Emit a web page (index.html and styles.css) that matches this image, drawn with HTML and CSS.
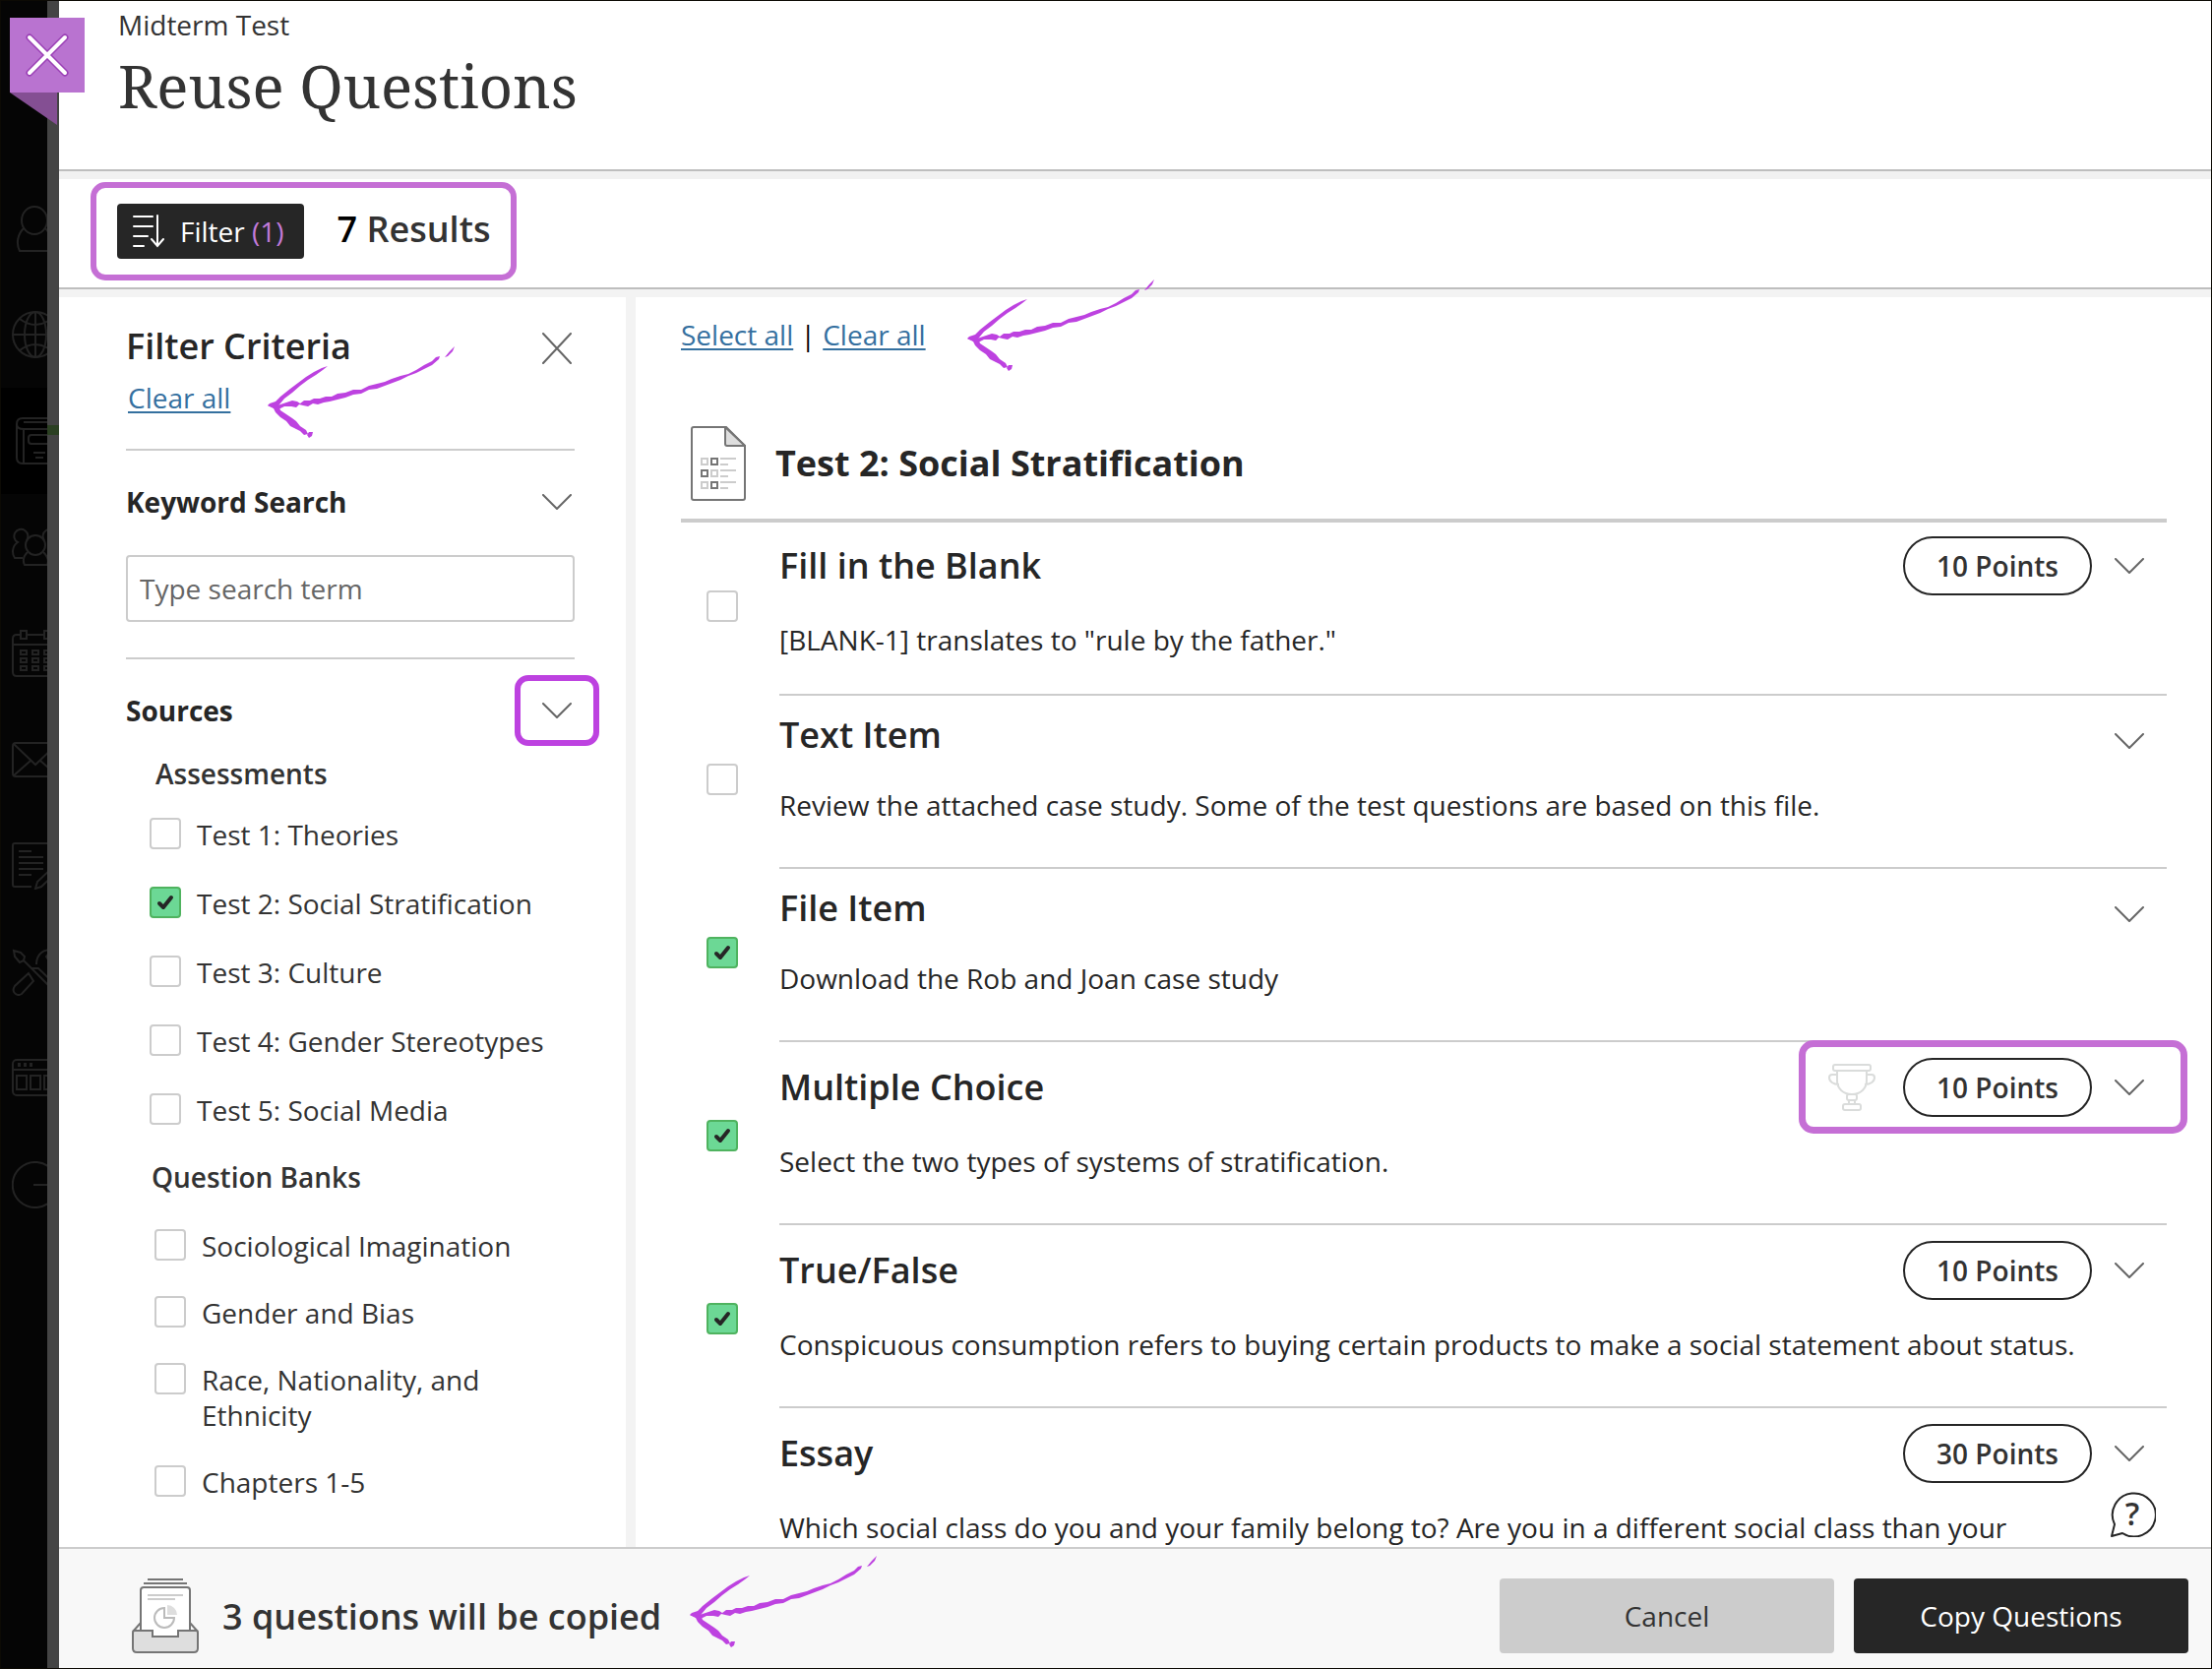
FILE: index.html
```html
<!DOCTYPE html>
<html lang="en">
<head>
<meta charset="utf-8">
<title>Reuse Questions</title>
<link rel="stylesheet" href="styles.css">
</head>
<body>
<svg class="defs" aria-hidden="true">
  <symbol id="chevron" viewBox="0 0 30 16"><path d="M1 1L15 15L29 1" fill="none" stroke="#666" stroke-width="2" stroke-linecap="round" stroke-linejoin="round"/></symbol>
  <symbol id="arrow" viewBox="0 0 192 94"><g fill="#bd42e0">
    <path d="M8 62L14 60L20 58L26 56L31 57L34 59L38 56L44 56L48 54L54 54L60 52L66 52L72 49L80 48L88 45L96 45L104 41L112 39L120 37L127 34L136 31L144 29L152 25L160 20L168 16L172 12L176 11L175 14L168 20L160 24L152 28L144 31L136 35L128 38L120 41L112 44L104 45L96 49L88 50L80 53L72 55L64 57L58 58L52 60L47 59L42 62L37 61L33 60L30 63L25 62L18 62L12 65Z"/>
    <path d="M181 12L186 6L191 1L189 6L184 11Z"/>
    <path d="M1 61L3 59L9 57L14 52L24 44L32 38L40 32L48 27L56 23L62 21L57 25L50 30L42 35L34 41L26 48L18 54L13 60L10 65Z"/>
    <path d="M1 61L12 61L14 66L20 70L26 74L30 77L34 82L40 86L42 90L38 91L34 87L28 84L24 82L20 77L14 73L9 68L7 64Z"/>
    <path d="M41 91L43 88L47 88L46 92L43 94Z"/>
  </g></symbol>
</svg>
<div class="app">
  <nav class="rail" aria-label="Main">
    <a class="rail-item" href="#" aria-label="Profile"><svg viewBox="0 0 48 48"><ellipse cx="23" cy="16" rx="13" ry="14"/><path d="M12 24C6 30 4 39 8 47H38C42 39 40 30 34 24"/></svg></a>
    <a class="rail-item" href="#" aria-label="Institution"><svg viewBox="0 0 48 48"><circle cx="24" cy="24" r="23"/><ellipse cx="24" cy="24" rx="11" ry="23"/><path d="M24 1V47M1 24H47M8 8Q24 20 40 8M8 40Q24 28 40 40"/></svg></a>
    <a class="rail-item rail-item-active" href="#" aria-label="Courses"><svg viewBox="0 0 48 48"><path d="M44 1H11Q5 1 5 7V41Q5 47 11 47H44M5 7Q5 12 12 12H44M12 12V47M12 5H44M44 18H20Q17 18 17 21V24Q17 27 20 27H44M22 36H34M24 41H32"/></svg></a>
    <a class="rail-item" href="#" aria-label="Organizations"><svg viewBox="0 0 48 48"><circle cx="24" cy="22" r="10"/><path d="M16 29C12 33 11 38 13 42H36C38 38 36 33 32 29M15 17A7 7 0 1 0 6 19C0 23 0 31 3 35H11M33 17A7 7 0 1 1 42 19C48 23 48 31 45 35H37"/></svg></a>
    <a class="rail-item" href="#" aria-label="Calendar"><svg viewBox="0 0 48 48"><path d="M9 5H5Q1 5 1 9V43Q1 47 5 47H43Q47 47 47 43V9Q47 5 43 5H39M15 5H33M1 15H47M9 1H15V9H9ZM33 1H39V9H33ZM9 21H15V25H9ZM21 21H27V25H21ZM33 21H39V25H33ZM9 29H15V33H9ZM21 29H27V33H21ZM33 29H39V33H33ZM9 37H15V41H9ZM21 37H27V41H21ZM33 37H39V41H33Z"/></svg></a>
    <a class="rail-item" href="#" aria-label="Messages"><svg viewBox="0 0 48 48"><rect x="1" y="7" width="46" height="34" rx="3"/><path d="M2 8L24 29L46 8M2 40L19 25M46 40L29 25"/></svg></a>
    <a class="rail-item" href="#" aria-label="Grades"><svg viewBox="0 0 48 48"><path d="M20 45H3Q1 45 1 43V3Q1 1 3 1H38Q40 1 40 3V24M7 9H20M7 15H32M7 21H32M7 27H32M7 33H20M24 47L26 40L42 25L46 30L30 45Z"/></svg></a>
    <a class="rail-item" href="#" aria-label="Tools"><svg viewBox="0 0 48 48"><path d="M2 2L9 4L13 8L12 12L8 14L3 8ZM12 12L20 20M17 25L3 38C-1 44 5 49 10 46L22 33ZM20 20L42 42L46 38L27 20ZM25 16C25 6 32 0 40 2L35 8L38 13L44 12"/></svg></a>
    <a class="rail-item" href="#" aria-label="Content"><svg viewBox="0 0 48 48"><rect x="1" y="5" width="46" height="36" rx="4"/><path d="M1 15H47M5 21H15V35H5ZM19 21H29V35H19ZM33 21H43V35H33Z"/><path d="M6 10H9M12 10H15M18 10H21" stroke-width="4"/></svg></a>
    <a class="rail-item" href="#" aria-label="Sign out"><svg viewBox="0 0 48 48"><path d="M42 10A23 23 0 1 0 42 38M22 24H47"/></svg></a>
  </nav>
  <div class="panel">
    <button class="ribbon" type="button" aria-label="Close"><svg viewBox="0 0 76 110"><path d="M0 76H48V109Z" fill="#844f93"/><path d="M0 0H76V76H0Z" fill="#b973d0"/><path d="M20 20L56 56M56 20L20 56" stroke="#9a3fb5" stroke-width="7" stroke-linecap="round"/><path d="M20 20L56 56M56 20L20 56" stroke="#fff" stroke-width="4" stroke-linecap="round"/></svg></button>
    <header class="header">
      <div class="context">Midterm Test</div>
      <h1 class="title">Reuse Questions</h1>
    </header>
    <div class="toolbar">
      <div class="toolbar-group">
        <button class="filter-button" type="button">
          <svg width="32" height="34" viewBox="0 0 32 34" fill="none" stroke="#fff" stroke-width="2" stroke-linecap="round"><path d="M1 2H20M1 12H20M1 22H15M1 32H11M25 1V31M19 25L25 32L31 25"/></svg>
          <span>Filter <span class="filter-count">(1)</span></span>
        </button>
        <div class="results"><span class="results-count">7</span> Results</div>
      </div>
    </div>
    <div class="body">
      <aside class="sidebar">
        <div class="criteria">
          <div class="criteria-head">
            <h2 class="heading">Filter Criteria</h2>
            <button class="icon-button" type="button" aria-label="Close filter"><svg width="30" height="32" viewBox="0 0 30 32"><path d="M1 1L29 31M29 1L1 31" stroke="#666" stroke-width="2" stroke-linecap="round"/></svg></button>
          </div>
          <a class="link" href="#">Clear all</a>
          <svg class="arrow arrow-criteria"><use href="#arrow"/></svg>
        </div>
        <section class="filter">
          <div class="filter-head">
            <label class="filter-title" for="keyword">Keyword Search</label>
            <button class="icon-button" type="button" aria-label="Toggle keyword search"><svg width="30" height="16"><use href="#chevron"/></svg></button>
          </div>
          <input class="search" id="keyword" type="text" placeholder="Type search term">
        </section>
        <section class="filter">
          <div class="filter-head">
            <h3 class="filter-title">Sources</h3>
            <button class="icon-button callout-toggle" type="button" aria-label="Toggle sources"><svg width="30" height="16"><use href="#chevron"/></svg></button>
          </div>
          <h4 class="group-title group-title-tests">Assessments</h4>
          <div class="options options-tests">
            <label class="option"><input class="check" type="checkbox"><span>Test 1: Theories</span></label>
            <label class="option"><input class="check" type="checkbox" checked><span>Test 2: Social Stratification</span></label>
            <label class="option"><input class="check" type="checkbox"><span>Test 3: Culture</span></label>
            <label class="option"><input class="check" type="checkbox"><span>Test 4: Gender Stereotypes</span></label>
            <label class="option"><input class="check" type="checkbox"><span>Test 5: Social Media</span></label>
          </div>
          <h4 class="group-title group-title-banks">Question Banks</h4>
          <div class="options options-banks">
            <label class="option"><input class="check" type="checkbox"><span>Sociological Imagination</span></label>
            <label class="option"><input class="check" type="checkbox"><span>Gender and Bias</span></label>
            <label class="option"><input class="check" type="checkbox"><span>Race, Nationality, and Ethnicity</span></label>
            <label class="option"><input class="check" type="checkbox"><span>Chapters 1-5</span></label>
          </div>
        </section>
      </aside>
      <main class="content">
        <div class="bulk">
          <a class="link" href="#">Select all</a><span class="bar">|</span><a class="link" href="#">Clear all</a>
          <svg class="arrow arrow-bulk"><use href="#arrow"/></svg>
        </div>
        <div class="source">
          <svg width="56" height="76" viewBox="0 0 56 76"><path d="M3 1H36L55 20V73Q55 75 53 75H3Q1 75 1 73V3Q1 1 3 1Z" fill="#fff" stroke="#757575" stroke-width="2"/><path d="M35 1V18Q35 20 37 20H55Z" fill="#dedede" stroke="#757575" stroke-width="2" stroke-linejoin="round"/><g fill="none" stroke="#ccc" stroke-width="2"><path d="M11 33H17V39H11ZM21 45H27V51H21ZM11 57H17V63H11ZM30 33H46M30 39H38M30 45H46M30 51H38M30 57H46M30 63H38"/><path d="M21 33H27V39H21ZM11 45H17V51H11ZM21 57H27V63H21Z" stroke="#757575"/></g></svg>
          <h2 class="source-title">Test 2: Social Stratification</h2>
        </div>
        <div class="questions">
          <article class="question scored">
            <input class="check" type="checkbox" aria-label="Fill in the Blank">
            <div class="question-body">
              <div class="question-head"><h3 class="heading">Fill in the Blank</h3><span class="points">10 Points</span><button class="icon-button" type="button" aria-label="Expand"><svg width="30" height="16"><use href="#chevron"/></svg></button></div>
              <p class="question-text">[BLANK-1] translates to "rule by the father."</p>
            </div>
          </article>
          <article class="question">
            <input class="check" type="checkbox" aria-label="Text Item">
            <div class="question-body">
              <div class="question-head"><h3 class="heading">Text Item</h3><button class="icon-button" type="button" aria-label="Expand"><svg width="30" height="16"><use href="#chevron"/></svg></button></div>
              <p class="question-text">Review the attached case study. Some of the test questions are based on this file.</p>
            </div>
          </article>
          <article class="question">
            <input class="check" type="checkbox" aria-label="File Item" checked>
            <div class="question-body">
              <div class="question-head"><h3 class="heading">File Item</h3><button class="icon-button" type="button" aria-label="Expand"><svg width="30" height="16"><use href="#chevron"/></svg></button></div>
              <p class="question-text">Download the Rob and Joan case study</p>
            </div>
          </article>
          <article class="question scored">
            <input class="check" type="checkbox" aria-label="Multiple Choice" checked>
            <div class="question-body">
              <div class="question-head callout-points"><h3 class="heading">Multiple Choice</h3><svg class="trophy" width="48" height="48" viewBox="0 0 48 48" fill="none" stroke="#dadcdb" stroke-width="2"><rect x="5" y="1" width="38" height="6" rx="2"/><path d="M9 7V17C9 25 15 31 24 31S39 25 39 17V7M9 11H4Q1 11 1 14C1 18 5 21 11 21M39 11H44Q47 11 47 14C47 18 43 21 37 21"/><rect x="19" y="31" width="10" height="6" rx="2"/><path d="M21 37V41M27 37V41"/><rect x="15" y="41" width="18" height="6" rx="2"/></svg><span class="points">10 Points</span><button class="icon-button" type="button" aria-label="Expand"><svg width="30" height="16"><use href="#chevron"/></svg></button></div>
              <p class="question-text">Select the two types of systems of stratification.</p>
            </div>
          </article>
          <article class="question scored">
            <input class="check" type="checkbox" aria-label="True/False" checked>
            <div class="question-body">
              <div class="question-head"><h3 class="heading">True/False</h3><span class="points">10 Points</span><button class="icon-button" type="button" aria-label="Expand"><svg width="30" height="16"><use href="#chevron"/></svg></button></div>
              <p class="question-text">Conspicuous consumption refers to buying certain products to make a social statement about status.</p>
            </div>
          </article>
          <article class="question scored question-essay">
            <div class="question-body">
              <div class="question-head"><h3 class="heading">Essay</h3><span class="points">30 Points</span><button class="icon-button" type="button" aria-label="Expand"><svg width="30" height="16"><use href="#chevron"/></svg></button></div>
              <p class="question-text">Which social class do you and your family belong to? Are you in a different social class than your</p>
            </div>
          </article>
        </div>
        <button class="help" type="button" aria-label="Help"><svg viewBox="0 0 48 48"><path d="M3 47L6 35A22 22 0 1 1 14 44Z" fill="#fff" stroke="#262626" stroke-width="2" stroke-linejoin="round"/></svg><span>?</span></button>
      </main>
    </div>
    <footer class="footer">
      <svg width="68" height="76" viewBox="0 0 68 76" fill="none" stroke="#757575" stroke-width="2"><path d="M16 1H52M12 5H56"/><path d="M1 54L9 45H59L67 54" fill="#f8f8f8"/><path d="M9 64V12Q9 9 12 9H56Q59 9 59 12V64" fill="#fff"/><path d="M3 53H21V59H47V53H65Q67 53 67 55V71Q67 75 63 75H5Q1 75 1 71V55Q1 53 3 53Z" fill="#dedede"/><path d="M22 50H46V58H22Z" fill="#fff" stroke="none"/><g stroke="#ccc"><path d="M16 17H52M16 21H44"/><path d="M33 30A10 10 0 1 0 43 40H33Z" stroke="#bbb"/></g><path d="M36 27A10 10 0 0 1 46 37H36Z" fill="#dedede" stroke="none"/></svg>
      <div class="status">3 questions will be copied</div>
      <svg class="arrow arrow-status"><use href="#arrow"/></svg>
      <button class="action" type="button">Cancel</button>
      <button class="action action-primary" type="button">Copy Questions</button>
    </footer>
  </div>
</div>
</body>
</html>
```
FILE: styles.css
```css
*, *::before, *::after { box-sizing: border-box; }

body {
  margin: 0;
  font-family: "Open Sans", "Noto Sans", sans-serif;
  font-size: 28px;
  line-height: 36px;
  color: #333;
  background: #fff;
}

h1, h2, h3, h4, p { margin: 0; }

button, input { font: inherit; color: inherit; }

button { padding: 0; border: 0; background: none; }

svg { display: block; flex: none; }

.defs { position: absolute; width: 0; height: 0; }

.app {
  display: flex;
  height: 100vh;
  border: 1px solid #0c0a04;
}

/* Dimmed navigation behind the panel */
.rail {
  flex: 0 0 59px;
  min-width: 0;
  padding-top: 177px;
  background: #050505;
  border-right: 12px solid #444;
}

.rail-item {
  display: flex;
  align-items: center;
  position: relative;
  height: 108px;
  padding-left: 11px;
  overflow: hidden;
}

.rail-item svg {
  width: 48px;
  height: 48px;
  fill: none;
  stroke: #232323;
  stroke-width: 2;
}

.rail-item-active { background: #000; overflow: visible; }

.rail-item-active svg { clip-path: inset(0 12px 0 0); }

.rail-item-active::after {
  content: "";
  position: absolute;
  left: 47px;
  top: 38px;
  width: 12px;
  height: 10px;
  background: #2b4022;
}

.panel {
  flex: 1;
  min-width: 0;
  position: relative;
  display: flex;
  flex-direction: column;
  background: #fff;
}

.ribbon {
  position: absolute;
  left: -50px;
  top: 17px;
  width: 76px;
  height: 110px;
}

.header {
  padding: 6px 60px 49px;
  border-bottom: 2px solid #bebebe;
}

.title {
  margin-top: 8px;
  font-family: "Noto Serif", "DejaVu Serif Condensed", "DejaVu Serif", serif;
  font-size: 60px;
  font-weight: 400;
  line-height: 72px;
}

.toolbar {
  padding: 3px 32px 7px;
  border-top: 8px solid #f1f1f1;
  border-bottom: 2px solid #bebebe;
}

.toolbar-group {
  display: flex;
  align-items: center;
  gap: 34px;
  width: max-content;
  height: 100px;
  padding: 0 21px;
  border: 6px solid #c56fd5;
  border-radius: 15px;
}

.filter-button {
  display: flex;
  align-items: center;
  gap: 16px;
  height: 56px;
  padding: 0 20px 0 16px;
  border-radius: 4px;
  background: #262626;
  color: #fff;
}

.filter-count { color: #c27ad9; }

.results { padding-bottom: 4px; font-size: 36px; font-weight: 600; }

.results-count { color: #000; }

.body {
  flex: 1;
  min-height: 0;
  display: flex;
  border-top: 8px solid #f3f3f3;
}

.sidebar {
  flex: 0 0 586px;
  padding: 28px 52px 0 68px;
  border-right: 10px solid #f3f3f3;
}

.criteria { position: relative; padding-bottom: 34px; }

.criteria-head { display: flex; justify-content: space-between; margin-bottom: 12px; }

.criteria .link { margin-left: 2px; }

.heading {
  font-size: 36px;
  font-weight: 600;
  line-height: 44px;
  color: #262626;
}

.link {
  color: #35709f;
  text-decoration-thickness: 2px;
  text-underline-offset: 3px;
}

.icon-button {
  display: flex;
  align-items: center;
  justify-content: center;
  width: 38px;
  height: 32px;
}

.criteria-head .icon-button { height: 44px; padding-top: 4px; }

.sidebar .icon-button { margin-right: -1px; }

.arrow { position: absolute; width: 192px; height: 94px; }

.arrow-criteria { left: 143px; top: 21px; }

.filter { padding: 34px 0 36px; border-top: 2px solid #ccc; }

.filter-head { display: flex; align-items: center; justify-content: space-between; }

.filter-title {
  font-size: 28px;
  font-weight: 700;
  color: #262626;
}

.search {
  display: block;
  width: 100%;
  height: 68px;
  margin-top: 36px;
  padding: 0 12px;
  border: 2px solid #ccc;
  border-radius: 4px;
  background: #fff;
}

.search::placeholder { color: #666; opacity: 1; }

.callout-toggle { position: relative; }

.callout-toggle::after {
  content: "";
  position: absolute;
  inset: -20px -24px;
  border: 6px solid #bd42e0;
  border-radius: 14px;
}

.group-title { font-size: 28px; font-weight: 600; }

.group-title-tests { margin: 28px 0 26px 30px; }

.group-title-banks { margin: 32px 0 34px 26px; }

.options { display: flex; flex-direction: column; }

.options-tests { gap: 34px; padding-left: 24px; }

.options-banks { gap: 32px; padding-left: 29px; }

.option { display: flex; gap: 16px; }

.option span { max-width: 360px; }

.check {
  appearance: none;
  flex: none;
  width: 32px;
  height: 32px;
  margin: 1px 0 0;
  border: 2px solid #ccc;
  border-radius: 4px;
  background: #fff;
}

.check:checked {
  border-color: #4fb35f;
  background: #6cd895 url("data:image/svg+xml,%3Csvg xmlns='http://www.w3.org/2000/svg' viewBox='0 0 28 28'%3E%3Cpath d='M8 15L12 19L20 9' fill='none' stroke='%23262626' stroke-width='4' stroke-linecap='round' stroke-linejoin='round'/%3E%3C/svg%3E") center / 28px no-repeat;
}

.content {
  flex: 1;
  min-width: 0;
  position: relative;
  padding: 20px 45px 0 46px;
}

.bulk { position: relative; display: flex; }

.bar { width: 30px; text-align: center; color: #000; }

.arrow-bulk { left: 290px; top: -39px; }

.source {
  display: flex;
  align-items: center;
  gap: 30px;
  margin-top: 75px;
  padding: 0 0 18px 10px;
  border-bottom: 4px solid #ccc;
}

.source-title {
  font-size: 36px;
  font-weight: 700;
  line-height: 44px;
  color: #262626;
}

.question { display: flex; gap: 42px; padding-left: 26px; }

.question > .check { margin-top: 69px; }

.question-body {
  flex: 1;
  min-width: 0;
  padding: 18px 0 44px;
  border-bottom: 2px solid #ccc;
}

.question-head {
  position: relative;
  display: flex;
  align-items: flex-end;
  padding-right: 19px;
}

.question-head .heading { flex: 1; }

.question-text { margin-top: 30px; line-height: 38px; color: #262626; }

.scored > .check { margin-top: 79px; }

.scored .question-body { padding-top: 16px; }

.scored .question-head { align-items: center; }

.scored .question-text { margin-top: 26px; }

.question:first-child > .check { margin-top: 69px; }

.question:first-child .question-body { padding: 14px 0 36px; }

.question-essay { padding-left: 100px; }

.question-essay .question-body { padding-bottom: 0; border-bottom: 0; }

.points {
  width: 192px;
  height: 60px;
  margin-right: 19px;
  border: 2px solid #262626;
  border-radius: 30px;
  font-weight: 600;
  line-height: 56px;
  text-align: center;
}

.trophy { margin-right: 28px; }

.callout-points::after {
  content: "";
  position: absolute;
  right: -21px;
  top: -18px;
  width: 395px;
  height: 95px;
  border: 7px solid #c56fd5;
  border-radius: 15px;
}

.help {
  position: absolute;
  right: 56px;
  bottom: 10px;
  width: 48px;
  height: 48px;
  font-size: 32px;
  font-weight: 600;
  line-height: 46px;
}

.help svg { position: absolute; inset: 0; }

.help span { position: relative; }

.footer {
  position: relative;
  display: flex;
  align-items: flex-start;
  height: 123px;
  padding: 16px 23px 0 74px;
  border-top: 2px solid #ccc;
  background: #f8f8f8;
}

.footer > svg:first-child { margin-top: 14px; }

.status {
  flex: 1;
  margin: 31px 0 0 24px;
  font-size: 36px;
  font-weight: 600;
  line-height: 44px;
}

.arrow-status { left: 640px; top: 6px; }

.action {
  width: 340px;
  height: 76px;
  margin-top: 14px;
  border-radius: 4px;
  background: #ccc;
}

.action-primary { margin-left: 20px; background: #262626; color: #fff; }
```
